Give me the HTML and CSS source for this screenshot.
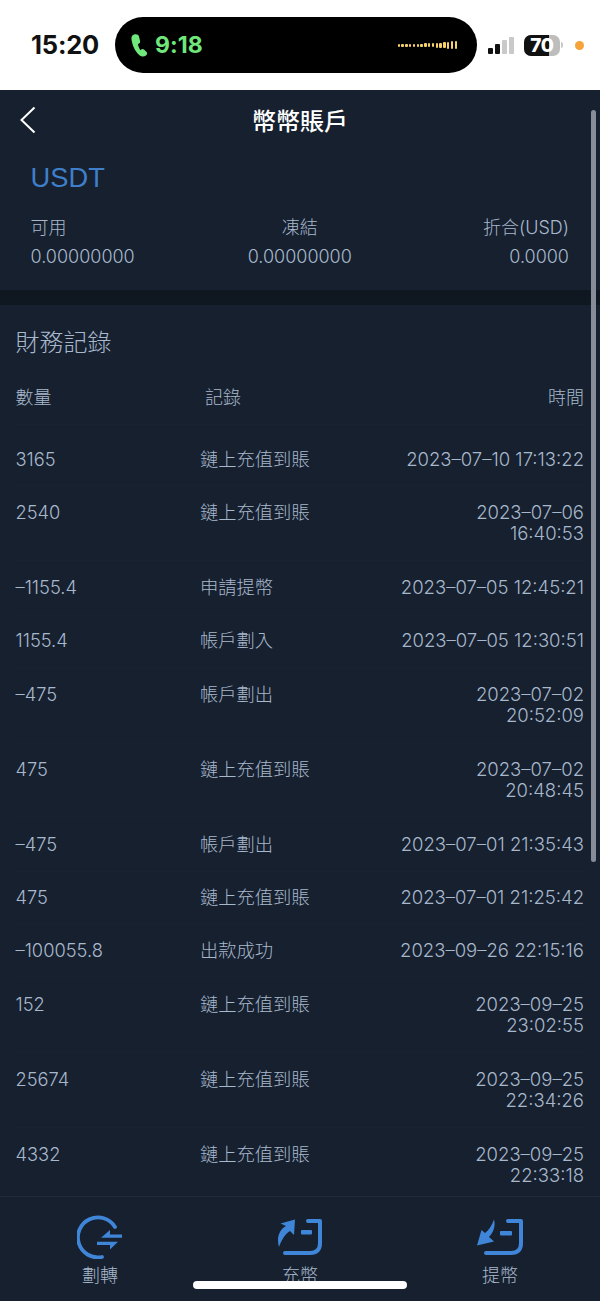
FILE: index.html
```html
<!DOCTYPE html>
<html lang="zh-Hant">
<head>
<meta charset="utf-8">
<title>幣幣賬戶</title>
<link rel="stylesheet" href="styles.css">
</head>
<body>
<div class="phone">
  <header class="status">
    <span class="clock">15:20</span>
    <div class="island">
      <svg class="phone-ic" width="17" height="23" viewBox="0 0 17 23"><path d="M2.6 .8 C.8 1.5 .2 3.2 .5 5.6 C1.3 11.2 4 17.4 8.2 21 C10.2 22.8 13 23 15 21.4 C16.5 20.2 16.4 18.8 15.3 17.8 L13 15.6 C12 14.8 11 14.9 10.2 15.6 L9.4 16.2 C8.2 14.4 7.3 12.2 6.9 10.2 L7.9 9.6 C9 9 9.3 8 9 6.8 L8 2.4 C7.6 .6 5 -.2 2.6 .8 Z" fill="#6fe77b"/></svg>
      <span class="call">9:18</span>
      <div class="wave"><i style="height:3px"></i><i style="height:3px"></i><i style="height:3px"></i><i style="height:3px"></i><i style="height:3px"></i><i style="height:3px"></i><i style="height:3px"></i><i style="height:4px"></i><i style="height:4px"></i><i style="height:4px"></i><i style="height:5px"></i><i style="height:5px"></i><i style="height:6px"></i><i style="height:7px"></i><i style="height:8px"></i><i style="height:8px"></i></div>
    </div>
    <div class="signal"><i class="on s1"></i><i class="on s2"></i><i class="s3"></i><i class="s4"></i></div>
    <div class="battery"><span class="batt-fill"></span><span class="batt-num">70</span></div>
    <span class="batt-tip"></span>
    <span class="dot"></span>
  </header>

  <main class="app">
    <nav class="nav">
      <svg class="back" width="18" height="28" viewBox="0 0 18 28"><path d="M15.5 1.5 L2.5 14 L15.5 26.5" fill="none" stroke="#fff" stroke-width="2"/></svg>
      <h1 class="nav-title">幣幣賬戶</h1>
    </nav>

    <section class="asset">
      <div class="coin">USDT</div>
      <div class="cols">
        <div class="col"><span class="lbl">可用</span><span class="val">0.00000000</span></div>
        <div class="col mid"><span class="lbl">凍結</span><span class="val">0.00000000</span></div>
        <div class="col end"><span class="lbl">折合(USD)</span><span class="val">0.0000</span></div>
      </div>
    </section>

    <section class="records">
      <h2 class="rec-title">財務記錄</h2>
      <div class="row head"><span class="c1">數量</span><span class="c2 h2c">記錄</span><span class="c3">時間</span></div>
      <div class="row"><span class="c1">3165</span><span class="c2">鏈上充值到賬</span><span class="c3">2023–07–10 17:13:22</span></div>
      <div class="row"><span class="c1">2540</span><span class="c2">鏈上充值到賬</span><span class="c3 wrap">2023–07–06 16:40:53</span></div>
      <div class="row"><span class="c1">–1155.4</span><span class="c2">申請提幣</span><span class="c3">2023–07–05 12:45:21</span></div>
      <div class="row"><span class="c1">1155.4</span><span class="c2">帳戶劃入</span><span class="c3">2023–07–05 12:30:51</span></div>
      <div class="row"><span class="c1">–475</span><span class="c2">帳戶劃出</span><span class="c3 wrap">2023–07–02 20:52:09</span></div>
      <div class="row"><span class="c1">475</span><span class="c2">鏈上充值到賬</span><span class="c3 wrap">2023–07–02 20:48:45</span></div>
      <div class="row"><span class="c1">–475</span><span class="c2">帳戶劃出</span><span class="c3">2023–07–01 21:35:43</span></div>
      <div class="row"><span class="c1">475</span><span class="c2">鏈上充值到賬</span><span class="c3">2023–07–01 21:25:42</span></div>
      <div class="row"><span class="c1">–100055.8</span><span class="c2">出款成功</span><span class="c3">2023–09–26 22:15:16</span></div>
      <div class="row"><span class="c1">152</span><span class="c2">鏈上充值到賬</span><span class="c3 wrap">2023–09–25 23:02:55</span></div>
      <div class="row"><span class="c1">25674</span><span class="c2">鏈上充值到賬</span><span class="c3 wrap">2023–09–25 22:34:26</span></div>
      <div class="row"><span class="c1">4332</span><span class="c2">鏈上充值到賬</span><span class="c3 wrap">2023–09–25 22:33:18</span></div>
    </section>

    <footer class="tabs">
      <div class="tab">
        <svg width="46" height="44" viewBox="0 0 46 44"><path d="M38 12 A20 20 0 1 0 25 42" fill="none" stroke="#3f86d8" stroke-width="3.8" stroke-linecap="round"/><path d="M24 22.8 L33 15 V19.5 H45 V22.8 Z M20 26.8 H41 L33 34.5 V30 H20 Z" fill="#3f86d8"/></svg>
        <span>劃轉</span>
      </div>
      <div class="tab">
        <svg width="46" height="44" viewBox="0 0 46 44"><path d="M31 6 H43 V28 Q43 38 33 38 H8" fill="none" stroke="#3f86d8" stroke-width="4" stroke-linecap="round" stroke-linejoin="round"/><rect x="24" y="15" width="11" height="4.5" rx="1" fill="#3f86d8"/><path d="M18 4.5 L17 20 L13 16 C8 19 4.5 25 2 32 C-1 22 3 14 9 11 L3.5 8.5 Z" fill="#3f86d8"/></svg>
        <span>充幣</span>
      </div>
      <div class="tab">
        <svg width="46" height="44" viewBox="0 0 46 44"><path d="M31 6 H44 V28 Q44 38 34 38 H9" fill="none" stroke="#3f86d8" stroke-width="4" stroke-linecap="round" stroke-linejoin="round"/><rect x="23" y="16" width="12" height="4.5" rx="1" fill="#3f86d8"/><path d="M17 4.5 C19 11 16 18 12 22 L17 26.5 L0 30.5 L4.5 15 L8 18 C12 15 15 10 17 4.5 Z" fill="#3f86d8"/></svg>
        <span>提幣</span>
      </div>
    </footer>
    <div class="scrollbar"></div>
    <div class="home"></div>
  </main>
</div>
</body>
</html>
```
FILE: styles.css
```css
* { box-sizing: border-box; }
html, body { margin: 0; padding: 0; }
body { background: #16202f; font-family: "Liberation Sans", "Noto Sans CJK TC", sans-serif; overflow: hidden; }
.phone { width: 600px; height: 1301px; display: flex; flex-direction: column; overflow: hidden; }

.status { height: 90px; flex: none; background: #fff; display: flex; align-items: center; padding-left: 31px; }
.clock { font: 700 25.5px "Inter", "Liberation Sans", sans-serif; color: #111; width: 84px; flex: none; margin-top: -1px; letter-spacing: -.2px; }
.island { width: 362px; flex: none; height: 56px; background: #000; border-radius: 28px; display: flex; align-items: center; padding: 0 20px 0 16px; }
.phone-ic { margin-top: 1px; }
.call { font: 700 23px "Inter", "Liberation Sans", sans-serif; color: #6fe77b; margin-left: 7px; letter-spacing: .1px; }
.wave { margin-left: auto; display: flex; align-items: center; gap: 1.3px; }
.wave i { width: 2.5px; background: #f7d26a; display: block; border-radius: 1px; }
.signal { display: flex; align-items: flex-end; gap: 2px; margin-left: 11px; height: 17px; margin-top: 1px; }
.signal i { width: 5px; background: #c9c9c9; border-radius: 1px; display: block; }
.signal .on { background: #111; }
.s1 { height: 6px; } .s2 { height: 10px; } .s3 { height: 14px; } .s4 { height: 17px; }
.battery { position: relative; flex: none; width: 36px; height: 21px; margin-left: 10px; border-radius: 7px; background: #bdbdbd; overflow: hidden; display: flex; align-items: center; justify-content: center; }
.batt-fill { position: absolute; left: 0; top: 0; bottom: 0; width: 25px; background: #111; }
.batt-num { position: relative; font: 800 19px "Inter", "Liberation Sans", sans-serif; color: #fff; letter-spacing: -.2px; }
.batt-tip { width: 2px; height: 6px; background: #c9c9c9; margin-left: 1px; border-radius: 0 2px 2px 0; }
.dot { width: 9px; height: 9px; border-radius: 50%; background: #f5a33a; margin-left: 12px; }

.app { position: relative; flex: 1; display: flex; flex-direction: column; min-height: 0; background: #16202f; }
.nav { height: 60px; flex: none; display: flex; align-items: center; justify-content: center; position: relative; }
.back { position: absolute; left: 19px; top: 16px; }
.nav-title { margin: 0; font-size: 24px; line-height: 60px; font-weight: 500; color: #fff; font-family: "Noto Sans CJK TC", sans-serif; }

.asset { flex: none; height: 155px; padding: 12px 31px 0 30.5px; border-bottom: 15px solid #0f1720; }
.coin { font-size: 27.3px; line-height: 32px; color: #3f7fc9; }
.cols { display: grid; grid-template-columns: 1fr 1fr 1fr; margin-top: 23px; }
.col { display: flex; flex-direction: column; gap: 7px; }
.col.mid { align-items: center; }
.col.end { align-items: flex-end; }
.lbl { font-size: 18px; line-height: 22px; color: #a8b8cc; font-family: "Inter", "Liberation Sans", "Noto Sans CJK TC", sans-serif; font-weight: 300; }
.val { font-family: "Inter", "Liberation Sans", sans-serif; font-size: 18px; line-height: 22px; color: #a8b8cc; font-weight: 300; }

.records { flex: 1; min-height: 0; padding: 0 16px 0 15.5px; overflow: hidden; }
.rec-title { margin: 0; padding-top: 18px; font-size: 24px; line-height: 36px; font-weight: 300; color: #a8b8cc; font-family: "Noto Sans CJK TC", sans-serif; }
.row { display: flex; align-items: flex-start; padding: 15.5px 0 15.3px; border-bottom: 1px solid #19232f; font-size: 18px; line-height: 21.6px; color: #a8b8cc; font-family: "Inter", "Liberation Sans", "Noto Sans CJK TC", sans-serif; font-weight: 300; }
.head { align-items: center; padding: 0; height: 54px; margin-top: 12px; margin-bottom: 8px; }
.c1 { width: 184.5px; flex: none; font-size: 18.3px; }
.c2 { width: 170px; flex: none; font-size: 18.3px; }
.h2c { padding-left: 5px; font-size: 18px; }
.c3 { flex: 1; text-align: right; white-space: nowrap; font-size: 18.5px; }
.head .c1, .head .c3 { font-size: 18px; }
.c3.wrap { white-space: normal; padding-left: 60px; }

.tabs { position: absolute; left: 0; right: 0; bottom: 0; height: 105px; background: #16202f; border-top: 1px solid #1f2a3a; display: flex; padding-top: 18px; }
.tab { position: relative; flex: none; width: 200px; display: flex; flex-direction: column; align-items: center; gap: 3px; color: #a8b8cc; font-size: 18px; line-height: 24px; font-family: "Noto Sans CJK TC", sans-serif; font-weight: 300; }
.scrollbar { position: absolute; right: 4px; top: 20px; width: 5px; height: 752px; border-radius: 2.5px; background: #868d98; }
.home { position: absolute; left: 193px; bottom: 12px; width: 214px; height: 8px; border-radius: 4px; background: #fff; }
```
